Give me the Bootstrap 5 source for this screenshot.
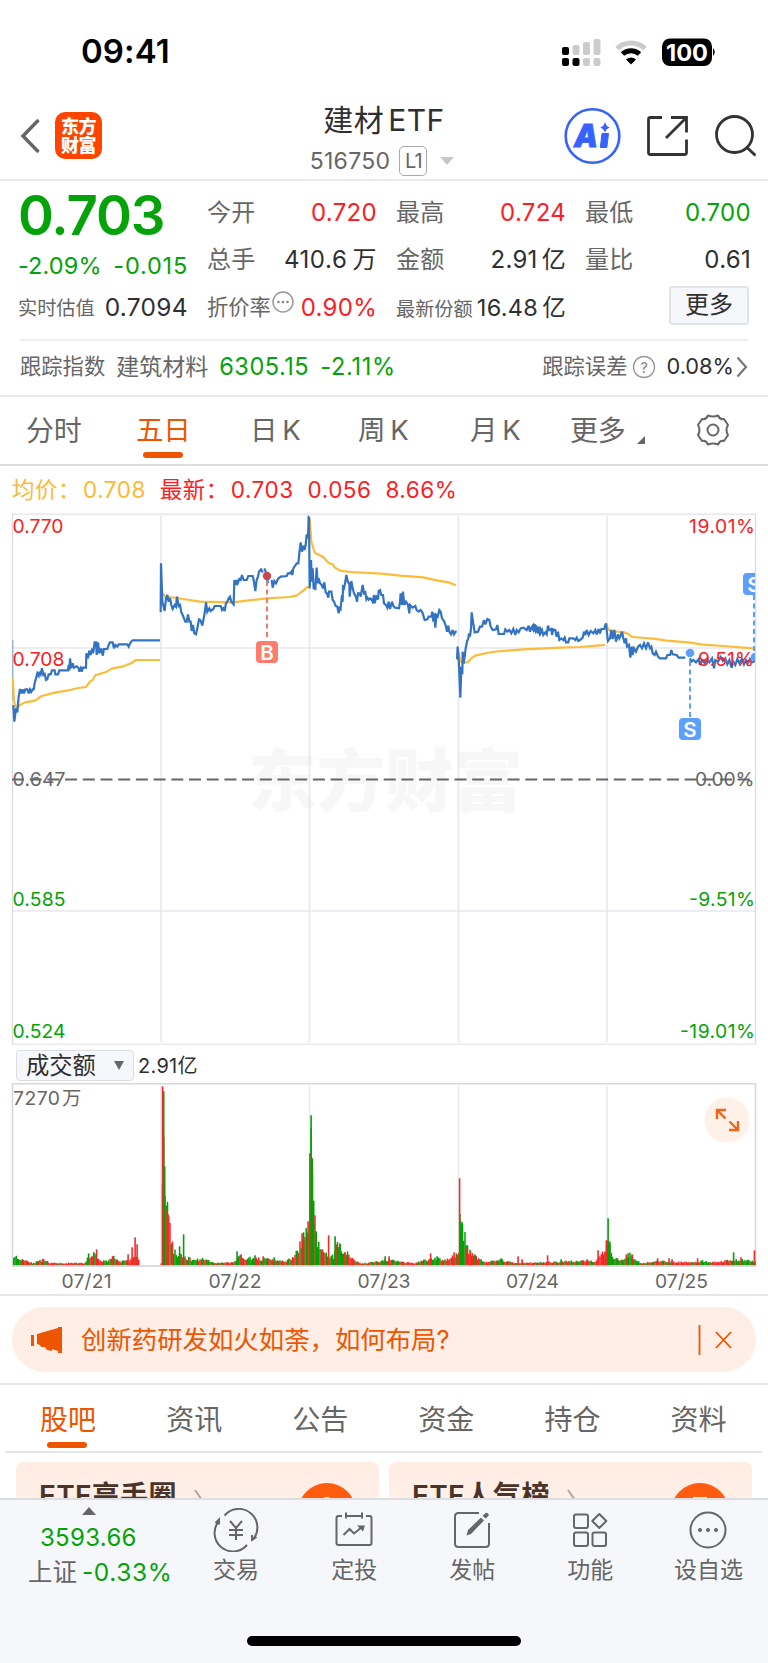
<!DOCTYPE html>
<html lang="zh-CN">
<head>
<meta charset="utf-8">
<meta name="viewport" content="width=device-width, initial-scale=1">
<title>建材ETF 516750</title>
<link href="https://cdn.jsdelivr.net/npm/bootstrap@5.3.0/dist/css/bootstrap.min.css" rel="stylesheet">
<style>
  :root { --up:#fb2023; --down:#04a30a; --brand:#ee5500; --ink:#2f2f31; --dim:#666; }
  body { width:768px; height:1663px; overflow:hidden; background:#fff; color:var(--ink);
         font-family:Inter,"Noto Sans CJK SC",sans-serif; font-size:24px; line-height:1; letter-spacing:.3px; }
  svg { display:block; flex:none; }
  .up { color:var(--up); } .down { color:var(--down); } .dim { color:var(--dim); } .brand { color:var(--brand); }
  .nowrap > *, .nowrap { white-space:nowrap; }
  .status { height:95px; padding:8px 51px 0 81px; }
  .clock { font-size:33px; font-weight:600; color:#000; letter-spacing:.1px; }
  .head { height:86px; border-bottom:2px solid #ececec; padding:0 12px 0 20px; }
  .logo { width:47px; height:47px; border-radius:10px; background:#ff4400; color:#fff; font-size:18px; line-height:19px; font-weight:900; letter-spacing:-.5px; margin:-4px 0 0 14px; padding-top:1px; }
  .level { width:28px; height:30px; border:1.5px solid #aaa; border-radius:5px; font-size:20px; letter-spacing:-1px; }
  .quote { height:158px; display:grid; grid-template-columns:170px 170px 170px 166px; column-gap:19px; padding:0 0 0 18px; }
  .price { font-size:54.5px; font-weight:600; letter-spacing:-1.1px; height:62px; line-height:69px; }
  .cell { height:47.5px; }
  .s19 { font-size:19.2px; letter-spacing:0; } .s21 { font-size:21.3px; letter-spacing:0; } .s23 { font-size:23px; letter-spacing:0; }
  .more { width:80px; height:39px; border:2px solid #e0e3e8; border-radius:4px; background:#f6f7fa; letter-spacing:0; margin:-5px 2px 0 0; }
  .track { margin:0 20px; height:56px; border-top:2px solid #efefef; font-size:23.6px; padding-bottom:2px; }
  .period { height:71px; border-top:2px solid #ececec; border-bottom:2px solid #dedede; font-size:27.5px; color:var(--dim); letter-spacing:-.2px; }
  .period > div, .topics > div { position:relative; }
  .bar-on::after { content:""; position:absolute; left:50%; margin-left:-20px; width:40px; height:6px; border-radius:3px; background:var(--brand); bottom:-14px; }
  .topics .bar-on::after { margin-left:-21px; }
  .legend { height:47px; font-size:22.5px; padding:1px 0 0 12px; letter-spacing:.5px; }
  .pick { height:38px; padding:5px 0 0 16px; font-size:20px; }
  .pick > div { height:31px; }
  .picker { width:118px; border:1.5px solid #dadde3; border-radius:4px; background:#f6f7fa; font-size:23.3px; padding:0 9px; letter-spacing:0; }
  .notice { margin:11px 12px 11px; height:65px; border-radius:33px; background:#ffeee5; color:var(--brand); font-size:25.4px; letter-spacing:0; padding:0 24px 0 19px; }
  .rule { border-top:2px solid #e8e8ea; }
  .topics { height:68px; margin:0 6px 0 5px; padding-top:4px; border-bottom:2px solid #e5e6ea; font-size:28px; letter-spacing:0; color:var(--dim); }
  .topics > div { width:126.1px; height:28px; text-align:center; }
  .cards { height:45px; padding:9px 16px 0 16px; gap:10px; overflow:hidden; }
  .promo { height:60px; border-radius:8px; background:linear-gradient(#ffece3,#fff2eb); flex:1; overflow:hidden; padding:20px 0 0 23px; font-size:28px; font-weight:600; color:#4a342a; }
  .dock { height:165px; background:#f6f7fa; border-top:2px solid #dcdee1; font-size:23px; color:var(--dim); letter-spacing:0; }
  .dock .tool { width:118.1px; }
  .dock .tool span { margin-top:7px; }
  .home { width:274px; height:10px; border-radius:5px; background:#000; margin:56px auto 0; }
  text { font-family:Inter,"Noto Sans CJK SC",sans-serif; letter-spacing:0; }
</style>
</head>
<body>
<div class="status d-flex align-items-center justify-content-between">
  <div class="clock">09:41</div>
  <svg width="156" height="32" viewBox="561 35 156 32">
    <g fill="#000"><rect x="562" y="46" width="7" height="8" rx="2"/><rect x="562" y="57" width="7" height="8" rx="2"/><rect x="572.5" y="57" width="7" height="8" rx="2"/></g>
    <g fill="#cbcbcb"><rect x="572.5" y="44" width="7" height="10" rx="2"/><rect x="583" y="41" width="7" height="13" rx="2"/><rect x="593.5" y="38" width="7" height="16" rx="2"/><rect x="583" y="57" width="7" height="8" rx="2"/><rect x="593.5" y="57" width="7" height="8" rx="2"/></g>
    <path d="M617 47.500a20.500 20.500 0 0 1 28 0" fill="none" stroke="#cbcbcb" stroke-width="5"/>
    <path d="M622.500 53a12.500 12.500 0 0 1 17 0" fill="none" stroke="#000" stroke-width="5"/>
    <path d="M626 58.500a7.500 7.500 0 0 1 10 0l-5 5z" fill="#000"/>
    <rect x="662" y="37.500" width="50" height="27.500" rx="8"/><path d="M713 47q3.500 4 0 8z"/>
    <text x="687" y="59.500" font-size="23" font-weight="700" fill="#fff" text-anchor="middle" textLength="42" lengthAdjust="spacingAndGlyphs">100</text>
  </svg>
</div>
<div class="head d-flex align-items-center">
  <svg width="21" height="38" viewBox="0 0 21 38"><path d="M18.500 2L3 18l15.500 16" fill="none" stroke="#666" stroke-width="3.400"/></svg>
  <div class="logo d-flex flex-column align-items-center justify-content-center"><div>东方</div><div>财富</div></div>
  <div class="flex-fill d-flex flex-column align-items-center">
    <div class="nowrap" style="font-size:30px;letter-spacing:.5px;margin:7px 0 11px 102px">建材<span style="margin-left:4px">ETF</span></div>
    <div class="d-flex align-items-center dim" style="margin-left:98px;font-size:23px"><span>516750</span><span class="level d-flex align-items-center justify-content-center" style="margin:0 13px 0 9px">L1</span><svg width="14" height="8"><path d="M0 0h14L7 8z" fill="#c8c8c8"/></svg></div>
  </div>
  <svg width="192" height="60" viewBox="564 107 192 60" fill="none" stroke="#333" stroke-width="2.800">
    <circle cx="592.500" cy="136" r="26.800" stroke="#3663ff" stroke-width="2.600"/>
    <text x="574" y="147" font-size="32" font-weight="900" font-style="italic" fill="#3663ff" stroke="#3663ff" stroke-width=".8" textLength="24" lengthAdjust="spacingAndGlyphs">A</text>
    <path d="M602 133.500h6.500l-1.700 14h-6.500z" fill="#3663ff" stroke="#3663ff" stroke-width="1"/>
    <path d="M605 122q1.500 5 5 5.500q-4 1-5 5.500q-1-4.500-5-5.500q3.500-.5 5-5.500z" fill="#3663ff" stroke="none"/>
    <path d="M662 117.500h-11.500q-2 0-2 2v33q0 2 2 2h34q2 0 2-2v-13M671 117.500h15.500v15M686 118l-20 20"/>
    <circle cx="734.500" cy="134.500" r="18"/><path d="M747 147.500l8.500 8"/>
  </svg>
</div>

<div class="quote nowrap">
  <div>
    <div class="price down">0.703</div>
    <div class="d-flex justify-content-between down" style="height:46px;align-items:center;font-size:23.5px"><span style="letter-spacing:.1px">-2.09%</span><span style="letter-spacing:.8px">-0.015</span></div>
    <div class="d-flex justify-content-between align-items-center" style="height:36px"><span class="s19 dim pt-1">实时估值</span><span style="font-size:24.500px">0.7094</span></div>
  </div>
  <div style="padding-top:8px">
    <div class="cell d-flex justify-content-between align-items-center"><span class="dim">今开</span><span class="up">0.720</span></div>
    <div class="cell d-flex justify-content-between align-items-center"><span class="dim">总手</span><span style="letter-spacing:.6px">410.6<span style="margin-left:5px">万</span></span></div>
    <div class="cell d-flex justify-content-between align-items-center"><span class="s21 dim">折价率</span>
      <svg width="22" height="34" viewBox="0 0 22 34" style="margin-left:-6px"><circle cx="11" cy="11" r="10" fill="none" stroke="#999" stroke-width="1.500"/><g fill="#888"><circle cx="6.500" cy="11" r="1.300"/><circle cx="11" cy="11" r="1.300"/><circle cx="15.500" cy="11" r="1.300"/></g></svg>
      <span class="up">0.90%</span></div>
  </div>
  <div style="padding-top:8px">
    <div class="cell d-flex justify-content-between align-items-center"><span class="dim">最高</span><span class="up">0.724</span></div>
    <div class="cell d-flex justify-content-between align-items-center"><span class="dim">金额</span><span>2.91<span style="margin-left:4px">亿</span></span></div>
    <div class="cell d-flex justify-content-between align-items-center"><span class="s19 dim pt-1">最新份额</span><span style="font-size:23.500px">16.48<span style="margin-left:4px">亿</span></span></div>
  </div>
  <div style="padding-top:8px">
    <div class="cell d-flex justify-content-between align-items-center"><span class="dim">最低</span><span class="down">0.700</span></div>
    <div class="cell d-flex justify-content-between align-items-center"><span class="dim">量比</span><span>0.61</span></div>
    <div class="cell d-flex justify-content-end align-items-center"><div class="more d-flex align-items-center justify-content-center">更多</div></div>
  </div>
</div>
<div class="track d-flex align-items-center nowrap">
  <span class="s21 dim">跟踪指数</span><span class="s23 dim" style="margin-left:11px">建筑材料</span><span class="down" style="margin-left:11px;letter-spacing:.5px">6305.15</span><span class="down" style="margin-left:11px;letter-spacing:.7px">-2.11%</span>
  <span class="s21 dim ms-auto">跟踪误差</span>
  <svg width="24" height="24" style="margin:0 10px 0 5px"><circle cx="12" cy="12" r="10.500" fill="none" stroke="#999" stroke-width="1.400"/><text x="12" y="17.500" font-size="15" fill="#888" text-anchor="middle">?</text></svg>
  <span style="font-size:21.800px;letter-spacing:0">0.08%</span>
  <svg width="12" height="22" style="margin-left:2px"><path d="M1.500 1.500L10 11l-8.500 9.500" fill="none" stroke="#777" stroke-width="2.200"/></svg>
</div>

<div class="period d-flex align-items-center nowrap" style="padding-left:26px">
  <div style="width:110px;font-size:28px">分时</div>
  <div style="width:114px" class="brand"><span class="bar-on d-inline-block position-relative">五日</span></div>
  <div style="width:108px">日<span style="margin-left:5px">K</span></div><div style="width:112px">周<span style="margin-left:5px">K</span></div><div style="width:100px">月<span style="margin-left:5px">K</span></div>
  <div style="width:126px" class="d-flex align-items-center"><span style="font-size:28px">更多</span><svg width="9" height="9" style="margin:19px 0 0 11px"><path d="M8 0v8H0z" fill="#666"/></svg></div>
  <svg width="34" height="36" viewBox="-17 -18 34 36" fill="none" stroke="#666" stroke-width="2" style="margin-top:-2px"><path d="M-5-14.500q5 2 10 0q2 4.500 6 3.500l4 6q-3 5 0 10l-4 6q-4-1-6 3.500q-5-2-10 0q-2-4.500-6-3.500l-4-6q3-5 0-10l4-6q4 1 6-3.500z" stroke-linejoin="round"/><circle r="5.500"/></svg>
</div>
<div class="legend d-flex align-items-center nowrap"><span style="color:#fdb933">均价：</span><span style="color:#fdb933;margin-left:2px">0.708</span><span class="up" style="margin-left:14px">最新：</span><span class="up" style="margin-left:2px">0.703</span><span class="up" style="margin-left:14px">0.056</span><span class="up" style="margin-left:14px">8.66%</span></div>

<svg width="768" height="532" viewBox="0 513 768 532" fill="none">
  <defs><clipPath id="plot"><rect x="12" y="513" width="743" height="532"/></clipPath></defs>
  <text x="248" y="806" font-size="68" font-weight="900" fill="#f7f7f7" textLength="274" lengthAdjust="spacingAndGlyphs">东方财富</text>
  <path d="M161 516v526M309.500 516v526M458.500 516v526M607 516v526M12 648h743M12 911h743" stroke="#e6e9f0" stroke-width="1.700"/>
  <path d="M12 514.200h743.500M12 1044.500h743.500" stroke="#ebebed" stroke-width="2"/><path d="M12.500 514v530M755.500 514v530" stroke="#d9dbe0" stroke-width="1.300"/>
  <path d="M12 779.500h743" stroke="#666" stroke-width="2" stroke-dasharray="12 5.700"/>
  <path d="M12.800 640v60" stroke="#3274c3" stroke-width="1.500" opacity=".4"/>
  <g stroke-width="6.500" stroke-linejoin="round" clip-path="url(#plot)">
    <g stroke="#fdbb3a">
      <path transform="translate(0 505) scale(.33333)" d="M38 520L42 590 50 610 60 600 75 592 105 587 125 573 165 563 210 555 235 549 258 546 270 530 278 525 286 511 320 500 335 491 370 484 395 474 408 465H480M485 262L495 275 530 279 600 290 700 292 740 287 800 280 870 276 890 271 910 257 922 246 928 248"/>
      <path transform="translate(300 505) scale(.33333)" d="M29 40L34 110 40 130 46 145 64 153 74 160 80 168 88 175 98 177 104 187 120 197 150 201 245 206 300 212 370 217 410 226 445 232 468 241M475 440L482 470 492 475 505 470 512 462 525 452 575 441 620 437 670 433 720 431 780 428 840 426 890 422 915 420"/>
      <path transform="translate(530 505) scale(.33333)" d="M229 355L233 370 240 377 262 380 282 382 295 387 306 396 370 401 410 407 475 412 520 419 580 423 630 427 675 430"/>
    </g>
    <g stroke="#3274c3" stroke-width="6.600" stroke-linejoin="miter" stroke-miterlimit="3">
      <path transform="translate(0 505) scale(.33333)" d="M40 600L43 650 48 610 52 622 56 575 60 552 64 565 68 553 72 565 76 553 82 553 86 565 90 553 94 560 98 553H101L104 535 108 520 112 505 116 512 118 500 122 508 126 490 130 510 134 507 138 525 142 523 146 508H152L156 496H164L166 508H174L178 496H204L206 480 208 496 210 460 214 490 218 475 222 488 230 484 236 490 238 500 242 490 246 500 248 488H258L259 445 264 460 268 437 272 450 276 435 280 440 284 412H288L290 450 294 412 298 445 304 430 308 452 312 432H322L326 420 330 412H338L342 430 346 420 352 425 356 418H382L386 425 392 412 398 406H480M482 322L483 175 487 290 494 318 498 280 502 270 506 290 510 280 514 300 518 312 524 300 528 305 531 275 536 303 540 300 544 322 548 330 552 340 556 350H560L564 328 568 350H572L575 378 579 360 583 385 588 388 592 370 597 343 601 345 607 362 611 340 614 325 618 292 622 320 628 310 632 318 640 312 644 303H662L666 315 670 310 674 318 678 295 682 290 686 280 690 275 694 290 701 298 703 225 707 240 709 225 713 235 718 222 722 225 726 210 731 225H740L745 213H758L761 225 766 258 770 225 774 215 777 200 783 193 787 200H790M793 190L797 200 804 235M815 225L818 248 823 228 828 235 834 222 842 215 860 213 864 205H870L874 200 877 210 880 190 885 183 890 175H895L898 145 902 112 906 140 910 122 914 135 917 120 920 88 924 100 926 35 927 35"/>
      <path transform="translate(300 505) scale(.33333)" d="M27 35L29 250 33 165 36 230 38 190 41 250 46 252 50 188 53 235 56 220 60 235 64 238 69 250 73 232 77 262 81 265 85 278 87 260H94L98 285 102 290 107 303 112 305 116 325 119 305 121 318 126 270 128 290 129 240 131 255 135 235 139 210 144 232 148 235 149 275 154 228 158 250 162 265 168 275 171 290 174 265H180L182 275 188 240 192 265 196 262 199 283 202 278 206 284 210 280 214 283 218 290 222 270 224 295 229 275 234 283 236 258 240 255 244 270H249L252 295 258 300 262 308 266 290 270 312 276 290 280 303 285 308 297 310 300 290 302 265 306 300 309 260 313 300 318 290 324 300 328 325 330 300 338 308 346 303 350 315 356 320 362 315 367 322 371 335 374 345 382 343 386 335H394L397 320 400 350 403 325 406 368 409 330 413 335 418 315 422 320 426 340 432 348 438 365 441 380 445 362 448 380 453 388 458 375 462 388 467 380H470M471 463L473 425 477 480 481 578 484 485 487 508 488 440 491 475 494 455 497 430 501 410 505 400 507 385 510 395 513 370 515 322 519 350 524 382 534 380 540 365H546L552 345 556 358 562 342 568 345 572 365 578 375 588 373 592 360 596 387H612L616 373 622 380 628 375 634 385 640 372 646 390 650 375 656 382 662 370 670 368 680 375 686 362 690 380 694 368 700 360 703 380 706 362 710 365 714 385 718 365 724 378"/>
      <path transform="translate(530 505) scale(.33333)" d="M5 365L10 375 14 358 18 380 24 372 30 388 36 375 40 390 46 382 50 388 54 362 58 375 64 372 66 390 70 373 76 375 80 395 84 380 88 405 94 400 100 405 104 398 108 412H115L118 400H130L136 405 140 398 145 408 150 405 158 398 162 380 166 390 170 375 176 390 182 378 190 385 196 375 200 388 206 372 210 385 214 372H222L228 355 231 385 234 408 240 400 244 375 248 402 253 375 258 410 264 388 268 400 272 392 276 380 280 400 284 415 288 400 291 425 297 420 301 458 305 425 308 450 312 430 318 440 324 425 330 420 336 430 342 415 348 430 354 412 360 430 364 425 368 445 374 450 378 440 384 455 390 460H408L412 450H420L424 435 428 448 440 450 446 458H466M480 460L484 470 490 465 498 472 506 462 510 480 516 466 524 474 530 466 538 472 546 460 552 490 556 465 564 470 572 456 578 468 586 460 592 478 598 465 605 488 610 470 616 480 622 462 628 474 636 462 642 478 648 465 654 475 660 462 666 472 675 468"/>
    </g>
  </g>
  <path d="M267 581v59" stroke="#fb7466" stroke-width="2" stroke-dasharray="5 3.500"/><circle cx="267" cy="576" r="4.200" fill="#c94650"/>
  <rect x="256" y="641" width="22" height="22" rx="4" fill="#ff7c6c"/><text x="267" y="659.500" font-size="20.500" font-weight="600" fill="#fff" text-anchor="middle">B</text>
  <g clip-path="url(#plot)" stroke-dasharray="5 3.500" stroke="#5c9fff" stroke-width="2">
    <path d="M690 661v57M754 595v65"/>
    <g stroke="none" fill="#5c9fff"><circle cx="690" cy="653" r="4.300"/><circle cx="755" cy="657" r="4.300"/><rect x="679" y="718" width="22" height="22" rx="4"/><rect x="743" y="573" width="22" height="22" rx="4"/></g>
    <g stroke="none" fill="#fff" font-size="20.500" font-weight="600" text-anchor="middle"><text x="690" y="736.500">S</text><text x="754" y="591.500">S</text></g>
  </g>
  <g font-size="19.300">
    <g fill="#fb2023"><text x="12.500" y="533" textLength="51">0.770</text><text x="12.500" y="666" textLength="52">0.708</text><text x="689" y="533" textLength="66">19.01%</text><text x="698" y="666" textLength="56">9.51%</text></g>
    <g fill="#666"><text x="12.500" y="786" textLength="53">0.647</text><text x="695" y="786" textLength="59.500">0.00%</text></g>
    <g fill="#04a30a"><text x="12.500" y="905.500" textLength="53">0.585</text><text x="12.500" y="1037.500" textLength="53">0.524</text><text x="689" y="905.500" textLength="66">-9.51%</text><text x="680" y="1037.500" textLength="75">-19.01%</text></g>
  </g>
</svg>
<div class="pick d-flex nowrap">
  <div class="picker d-flex align-items-center justify-content-between"><span>成交额</span><svg width="10" height="9"><path d="M0 0h10L5 9z" fill="#666"/></svg></div>
  <div class="d-flex align-items-center" style="margin-left:4px">2.91亿</div>
</div>
<svg width="768" height="211" viewBox="0 1083 768 211">
  <path d="M309.500 1086v179M458.500 1086v179M607 1086v179M161 1086v179" stroke="#e6e9f0" stroke-width="1.500"/>
  <path d="M12.500 1084V1266M755.500 1084V1266M12 1083.800H756" stroke="#d5d7dc" stroke-width="1.500" fill="none"/>
  <g id="volume"></g>
  <path d="M12 1266H756" stroke="#cfd0d5" stroke-width="1.500"/>
  <g font-size="19.300" fill="#666"><text x="13" y="1105" textLength="47">7270</text><text x="62" y="1105">万</text></g>
  <g font-size="19.300" fill="#666" text-anchor="middle"><text x="86.500" y="1288" textLength="50">07/21</text><text x="235" y="1288" textLength="53">07/22</text><text x="384" y="1288" textLength="53">07/23</text><text x="532.500" y="1288" textLength="53">07/24</text><text x="681.500" y="1288" textLength="53">07/25</text></g>
  <circle cx="727" cy="1120" r="22.500" fill="#fff0e8"/>
  <path d="M717 1119v-9h9M717.500 1110.500l8 8M738 1121v9h-9M737.500 1129.500l-8-8" fill="none" stroke="#f2631b" stroke-width="2.400"/>
</svg>
<div class="rule"></div>

<div class="notice d-flex align-items-center nowrap">
  <svg width="31" height="26" viewBox="0 0 31 26" fill="#ee5500"><path d="M0 8h3v11H0zM6 7L27 1V0h4v26h-4v-2l-6-2v2l-5-1-2-3H10l-1-2-3-1z"/></svg>
  <span style="margin-left:19px">创新药研发如火如荼，如何布局?</span>
  <svg class="ms-auto" width="34" height="30" fill="none" stroke="#ee5500" stroke-width="1.800"><path d="M1.500 0v30M18 7l15 16M33 7L18 23"/></svg>
</div>
<div class="rule"></div>
<div class="topics d-flex align-items-center nowrap">
  <div class="brand bar-on">股吧</div><div>资讯</div><div>公告</div><div>资金</div><div>持仓</div><div>资料</div>
</div>
<div class="cards d-flex">
  <div class="promo d-flex align-items-start nowrap"><span>ETF高手圈</span><svg width="9" height="22" style="margin:7px 0 0 17px"><path d="M1 1l7 10-7 10" fill="none" stroke="#b5a39a" stroke-width="2"/></svg><svg class="ms-auto" width="58" height="58" style="margin-right:23px"><circle cx="29" cy="30" r="29" fill="#ff5c10"/><circle cx="29" cy="20" r="5" fill="#fff"/></svg></div>
  <div class="promo d-flex align-items-start nowrap"><span>ETF人气榜</span><svg width="9" height="22" style="margin:7px 0 0 17px"><path d="M1 1l7 10-7 10" fill="none" stroke="#b5a39a" stroke-width="2"/></svg><svg class="ms-auto" width="58" height="58" style="margin-right:23px"><circle cx="29" cy="30" r="29" fill="#ff5c10"/><rect x="22" y="15" width="14" height="6" fill="#fff"/></svg></div>
</div>
<div class="dock">
  <div class="d-flex nowrap" style="height:80px">
    <div style="width:177px">
      <svg width="14" height="8" style="margin:7px 0 0 82px"><path d="M7 0l7 8H0z" fill="#666"/></svg>
      <div class="down" style="margin:11px 0 0 40px;font-size:24px;letter-spacing:.3px">3593.66</div>
      <div style="margin:10px 0 0 28px;font-size:24.500px">上证 <span class="down" style="margin-left:-2px;font-size:24.500px;letter-spacing:.6px">-0.33%</span></div>
    </div>
    <div class="tool d-flex flex-column align-items-center"><svg width="46" height="44" viewBox="-23 -22 46 44" style="margin-top:8px" fill="none" stroke="#666" stroke-width="2"><path d="M-11.500-14.500A18 18 0 0 1 17 9.500M11 15A18 18 0 0 1-17-9M-20.500-7l3.500-3.500v5M20.500 7l-4.500 3v-5M-6-9l6 7 6-7M0-2V10M-7 0H7M-7 5H7"/></svg><span>交易</span></div>
    <div class="tool d-flex flex-column align-items-center"><svg width="46" height="44" viewBox="-23 -22 46 44" style="margin-top:8px" fill="none" stroke="#666" stroke-width="2"><path d="M-12-14h-3.500q-2 0-2 2v25q0 2 2 2h31q2 0 2-2v-25q0-2-2-2H12M-8-14H8M-8-17.500v6M8-17.500v6M-10.500 5l6-6 4.500 4.500L8-3"/><path d="M3-4.500h8l-2 6z" fill="#666" stroke="none"/></svg><span>定投</span></div>
    <div class="tool d-flex flex-column align-items-center"><svg width="46" height="44" viewBox="-23 -22 46 44" style="margin-top:8px" fill="none" stroke="#666" stroke-width="2"><path d="M7-17H-13.500q-3.500 0-3.500 3.500v27q0 3.500 3.500 3.500h27q3.500 0 3.500-3.500V-7"/><path d="M-5.500 5.500L-4 0 9-12.500l3 3L-1 4zM10.500-14l3-3q2-1 3.500 2l-3 3.500z" fill="#666" stroke="none"/></svg><span>发帖</span></div>
    <div class="tool d-flex flex-column align-items-center"><svg width="46" height="44" viewBox="-23 -22 46 44" style="margin-top:8px" fill="none" stroke="#666" stroke-width="2"><rect x="-16" y="-15.500" width="14" height="13.500" rx="2"/><rect x="-16" y="2.500" width="14" height="13.500" rx="2"/><rect x="2.500" y="2.500" width="13.500" height="13.500" rx="2"/><path d="M9.300-16l7 7-7 7-7-7z" stroke-linejoin="round"/></svg><span>功能</span></div>
    <div class="tool d-flex flex-column align-items-center"><svg width="46" height="44" viewBox="-23 -22 46 44" style="margin-top:8px" fill="none" stroke="#666" stroke-width="2"><circle r="17.500"/><g fill="#666" stroke="none"><circle cx="-8" r="2"/><circle r="2"/><circle cx="8" r="2"/></g></svg><span>设自选</span></div>
  </div>
  <div class="home"></div>
</div>
<script>
  // Turnover bars: [x, height, share of falling minutes] knots of each session, plus single spikes.
  const BASE = 1265.3, knots = [
    [13,10,.9],[17,6,.8],[21,6,.3],[27,4,.7],[33,2,.5],[42,5,.3],[50,2,.2],[85,2,.5],[88,9,.5],[94,10,.3],[100,4,.5],[106,4,.5],[113,8,.6],[118,4,.4],[128,4,.2],[135,9,0],[138,5,0],[139,0,0],[160,0,0],
    [161,3,0],[162,110,.5],[164,88,1],[166,54,.6],[168,45,0],[170,28,.5],[173,14,1],[177,9,.8],[183,8,.7],[192,5,.8],[200,6,.3],[207,5,.6],[214,2,.3],[234,3,.5],[238,9,.9],[244,7,.5],[256,6,.7],[264,6,.5],[276,4,.5],[286,4,.2],[294,8,.3],[300,20,.3],[305,26,.4],[309,42,.5],
    [310,150,1],[311,115,1],[313,55,.5],[315,30,1],[319,14,.8],[325,10,.8],[333,8,.8],[336,25,1],[341,12,.5],[346,12,.2],[353,6,.5],[360,1.500,.4],[382,4,.6],[388,5,.5],[400,3,.2],[414,2,.4],[425,5,.7],[436,6,.6],[445,5,.4],[453,9,.3],[458,10,.2],
    [459,50,1],[461,43,1],[463,30,.8],[466,18,.6],[471,11,.3],[477,7,.7],[484,3,.3],[502,5,.4],[514,2,.5],[555,3,.5],[580,4,.4],[594,4,.3],[604,15,.2],
    [606,22,.8],[609,22,1],[612,8,.8],[620,5,.5],[629,10,.9],[634,6,.6],[640,2,.3],[660,4,.5],[672,3,.2],[690,3,.4],[702,4,.7],[715,3,.3],[735,5,.5],[755,4,.3]];
  const spikes = [[88.500,12,1],[96.500,16,0],[128,11,0],[132,18,0],[135,28,0],[137,21,0],[162.500,179,0],[163.600,174,1],[164.600,99,1],[167,56,0],[168,51,0],[179.500,19,1],[183.500,31,1],[237,14,1],[241,11,0],[255,10,1],[263,9,0],[274,8,1],[302,32,0],[303.500,33,1],[308,44,0],[309.800,112,0],[311,150,1],[312.200,107,1],[313.500,41,1],[316,34,1],[328.500,30,0],[335,29,1],[340,21,1],[344.500,13,0],[385,9,1],[389,9,0],[430.500,12,0],[437,9,1],[454,13,0],[459.500,87,0],[460.600,44,1],[462,43,1],[466,18,0],[470.500,14,0],[475,11,1],[501,7,1],[518,9,0],[522,6,0],[547.500,10,0],[561,6,1],[587,6,0],[598,15,0],[605,13,0],[607,25,0],[608,47,1],[609.500,24,1],[628,12,1],[632,11,0],[657.500,7,0],[669,7,0],[672,6,0],[697.500,7,0],[733.500,13,1],[741,8,0],[754.300,15,0]];
  let seed = 11;
  const rnd = () => (seed = (seed * 16807) % 2147483647) / 2147483647;
  const bar = (x, h, fall, w) => `<rect x="${x}" y="${(BASE - h).toFixed(1)}" width="${w}" height="${h.toFixed(1)}" fill="${fall ? '#04a006' : '#f9292a'}"/>`;
  let out = '', k = 0;
  for (let x = 13; x < 755; x += 1.25) {
    while (k < knots.length - 2 && knots[k + 1][0] <= x) k++;
    const [x0, h0, p] = knots[k], [x1, h1] = knots[k + 1];
    const h = h0 + (h1 - h0) * (x - x0) / (x1 - x0);
    if (h < .3) continue;
    out += bar(x, Math.max(1.2, h * (.75 + .6 * rnd())), rnd() < p, 1.5);
  }
  out += spikes.map(s => bar(s[0] - .7, s[1], s[2], 1.6)).join('');
  document.getElementById('volume').innerHTML = out;
</script>
<script src="https://cdn.jsdelivr.net/npm/bootstrap@5.3.0/dist/js/bootstrap.bundle.min.js"></script>
</body>
</html>
